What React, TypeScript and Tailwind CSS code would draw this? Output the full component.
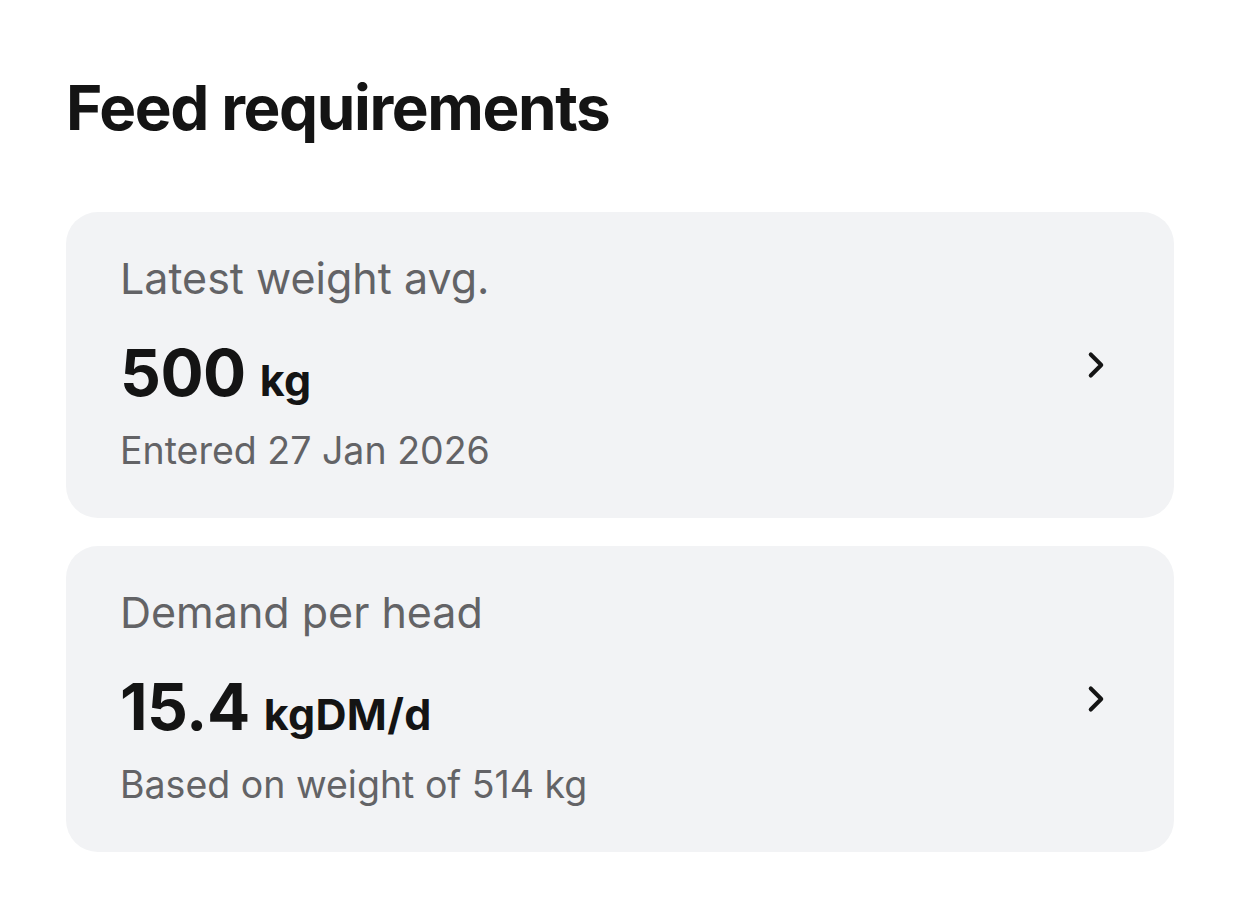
import { ChevronRight } from "lucide-react";

interface Stat {
  label: string;
  value: string;
  unit: string;
  note: string;
}

const STATS: Stat[] = [
  { label: "Latest weight avg.", value: "500", unit: "kg", note: "Entered 27 Jan 2026" },
  { label: "Demand per head", value: "15.4", unit: "kgDM/d", note: "Based on weight of 514 kg" },
];

function StatCard({ stat }: { stat: Stat }) {
  return (
    <button className="flex w-full items-center rounded-[32px] bg-[#f2f3f5] pl-[54px] pr-[57px] h-[306px] text-left">
      <div className="flex-1 min-w-0 self-start pt-[40px]">
        <p className="text-[43px] leading-[52px] text-[#636366]">{stat.label}</p>
        <p className="mt-[37px] flex items-baseline gap-[14px] text-[#141414] font-bold">
          <span className="text-[64px] leading-[64px] tracking-[-0.5px]">{stat.value}</span>
          <span className="text-[43px] leading-[43px] tracking-[0.3px]">{stat.unit}</span>
        </p>
        <p className="mt-[24px] text-[37.5px] leading-[44px] text-[#636366]">{stat.note}</p>
      </div>
      <ChevronRight className="w-[42px] h-[42px] text-[#141414]" strokeWidth={2.3} />
    </button>
  );
}

export default function App() {
  return (
    <div className="min-h-screen bg-white px-[66px] pt-[72px] font-['Inter',sans-serif]">
      <h1 className="text-[62px] leading-[72px] font-bold tracking-[-1.4px] text-[#141414]">Feed requirements</h1>
      <div className="mt-[68px] flex flex-col gap-[28px] w-[1108px]">
        {STATS.map((s) => (
          <StatCard key={s.label} stat={s} />
        ))}
      </div>
    </div>
  );
}
